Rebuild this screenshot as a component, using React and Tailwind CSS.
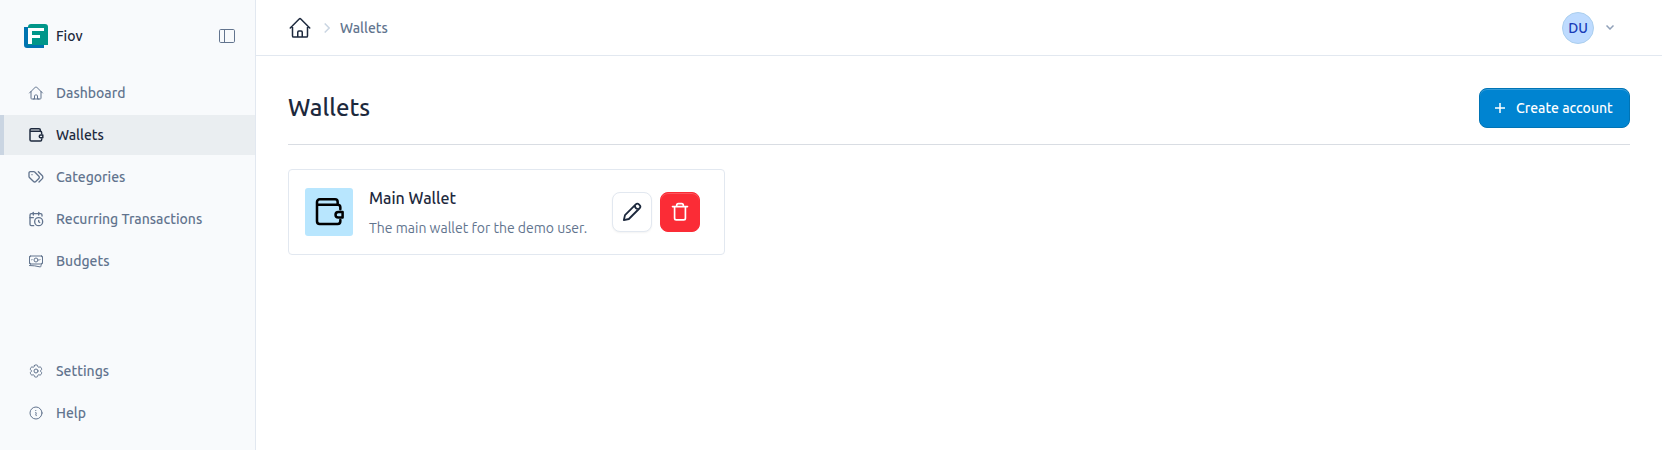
import React from "react";
import { CalendarClock as LucideCalendarClock } from "lucide-react";
import { HiOutlineHome, HiOutlineBanknotes, HiOutlineCog6Tooth, HiOutlineInformationCircle } from "react-icons/hi2";

const Icon = ({ className, sw = 1.5, children }) => (
  <svg viewBox="0 0 24 24" fill="none" stroke="currentColor" strokeWidth={sw} strokeLinecap="round" strokeLinejoin="round" className={className}>
    {children}
  </svg>
);

const Wallet = (p) => (
  <Icon {...p}>
    <path d="M20.500 10V8.500a2 2 0 0 0-2-2H3V19a2 2 0 0 0 2 2h13.500a2 2 0 0 0 2-2v-1M3 7.500V4.500a2 2 0 0 1 2-2h11.500a2 2 0 0 1 2 2v2" />
    <path d="M22.200 12v4.200h-3.200a2.100 2.100 0 0 1 0-4.200z" />
  </Icon>
);
const Tags = ({ className }) => (
  <Icon className={className} sw={2}>
    <path d="M1.500 6v5.200a2 2 0 0 0 .600 1.400l6.200 6.200a2.400 2.400 0 0 0 3.400 0l4.600-4.600a2.400 2.400 0 0 0 0-3.400L10.100 4.600A2 2 0 0 0 8.700 4H3.500a2 2 0 0 0-2 2zM16.500 19.500l4.700-4.700a3.500 3.500 0 0 0 0-5L15.500 4M6 8.500h.01" />
  </Icon>
);
const CalendarClock = ({ className }) => <LucideCalendarClock className={className} strokeWidth={2} />;
const NavWallet = ({ className }) => <Wallet className={className} sw={2.2} />;

const NavItem = ({ icon: I, label, active }) => (
  <a className={`flex h-10 items-center border-l-4 pl-6 text-sm font-medium ${active ? "border-[#cad5e2] bg-[#eaeef1] text-[#1d293d]" : "border-transparent text-[#62748e]"}`}>
    <I className="size-4 shrink-0" />
    <span className="ml-3 whitespace-nowrap">{label}</span>
  </a>
);

export default function App() {
  return (
    <div className="flex h-[450px] w-full bg-white font-['Ubuntu','Noto_Sans',sans-serif] text-[#1d293d]">
      <aside className="flex w-64 shrink-0 flex-col border-r border-[#e2e8f0] bg-[#f8fafc] pb-[17px]">
        <div className="mb-px flex h-[72px] items-center pr-5 pl-6">
          <svg viewBox="0 0 24 24" className="size-6">
            <path d="M0 3h5v18h15v3H3a3 3 0 0 1-3-3z" fill="#0074b0" />
            <path d="M7 0h14a3 3 0 0 1 3 3v18H4V3a3 3 0 0 1 3-3z" fill="#009689" />
            <path d="M4 4h16v3H8v4h8v3H8v6H4z" fill="#fff" />
          </svg>
          <span className="ml-2 text-sm font-medium">Fiov</span>
          <svg viewBox="0 0 16 14" fill="none" stroke="currentColor" className="ml-auto h-3.5 w-4 text-[#62748e]">
            <rect x=".5" y=".5" width="15" height="13" rx="1.200" />
            <path d="M5.500.5v13" />
          </svg>
        </div>
        <nav className="flex flex-col gap-0.5">
          <NavItem icon={HiOutlineHome} label="Dashboard" />
          <NavItem icon={NavWallet} label="Wallets" active />
          <NavItem icon={Tags} label="Categories" />
          <NavItem icon={CalendarClock} label="Recurring Transactions" />
          <NavItem icon={HiOutlineBanknotes} label="Budgets" />
        </nav>
        <nav className="mt-auto flex flex-col gap-0.5">
          <NavItem icon={HiOutlineCog6Tooth} label="Settings" />
          <NavItem icon={HiOutlineInformationCircle} label="Help" />
        </nav>
      </aside>
      <div className="flex min-w-0 flex-1 flex-col">
        <header className="flex h-14 shrink-0 items-center border-b border-[#e2e8f0] pr-12 pl-8">
          <HiOutlineHome className="size-6" />
          <svg viewBox="0 0 6 10" fill="none" stroke="#cad5e2" strokeWidth="1.500" className="ml-3 h-2.5 w-1.5">
            <path d="m.7.5 4.500 4.500L.7 9.500" />
          </svg>
          <span className="ml-[10px] text-sm font-medium text-[#62748e]">Wallets</span>
          <div className="ml-auto flex items-center">
            <span className="flex size-8 items-center justify-center rounded-full border border-[#abcfee] bg-[#bedbff] text-sm font-medium text-[#193cb8]">DU</span>
            <svg viewBox="0 0 8 5" fill="none" stroke="#90a1b9" strokeWidth="1.500" className="ml-3 h-[5px] w-2">
              <path d="m.5.5 3.500 3.500L7.500.5" />
            </svg>
          </div>
        </header>
        <main className="px-8 pt-8">
          <div className="flex h-[57px] items-start justify-between border-b border-[#d9dde3]">
            <h1 className="text-2xl leading-10 font-medium">Wallets</h1>
            <button className="flex h-10 w-[151px] items-center rounded-lg border border-[#0074b5] bg-[#0084d1] pl-[15px] text-sm font-medium text-white shadow-[inset_0_1px_0_0_rgba(255,255,255,0.2)]">
              <svg viewBox="0 0 10 10" fill="none" stroke="currentColor" strokeWidth="1.500" className="size-2.5">
                <path d="M5 0v10M0 5h10" />
              </svg>
              <span className="ml-[11px] whitespace-nowrap">Create account</span>
            </button>
          </div>
          <section className="mt-6 flex h-[86px] w-[437px] items-center rounded border border-[#e2e8f0] pr-6 pl-4">
            <div className="flex size-12 shrink-0 items-center justify-center rounded-[3px] bg-[#b8e6fe] text-black">
              <Wallet className="size-8" sw={1.9} />
            </div>
            <div className="ml-4 flex flex-col gap-1.5 pt-0.5">
              <h2 className="text-base leading-6 font-medium whitespace-nowrap">Main Wallet</h2>
              <p className="text-sm leading-6 whitespace-nowrap text-[#62748e]">The main wallet for the demo user.</p>
            </div>
            <button className="ml-auto flex size-10 shrink-0 items-center justify-center rounded-lg border border-[#e2e8f0] bg-white shadow-xs">
              <Icon className="size-5" sw={2.2}>
                <path d="m2.200 21.800 1.400-6L16.500 2.900a2.700 2.700 0 0 1 3.800 0l.8.8a2.700 2.700 0 0 1 0 3.800L8.200 20.400zM15.500 3.900c-.2 2.900 1.700 4.800 4.600 4.600" />
              </Icon>
            </button>
            <button className="ml-2 flex size-10 shrink-0 items-center justify-center rounded-lg border border-[#fb2c36] bg-[#fb2c36] text-white shadow-[inset_0_1px_0_0_rgba(255,255,255,0.2)]">
              <Icon className="size-5" sw={2}>
                <path d="M3 5.500h18M5.500 5.500V19.500a2 2 0 0 0 2 2h9a2 2 0 0 0 2-2V5.500M8 5.500V4a2 2 0 0 1 2-2h4a2 2 0 0 1 2 2v1.500" />
              </Icon>
            </button>
          </section>
        </main>
      </div>
    </div>
  );
}
